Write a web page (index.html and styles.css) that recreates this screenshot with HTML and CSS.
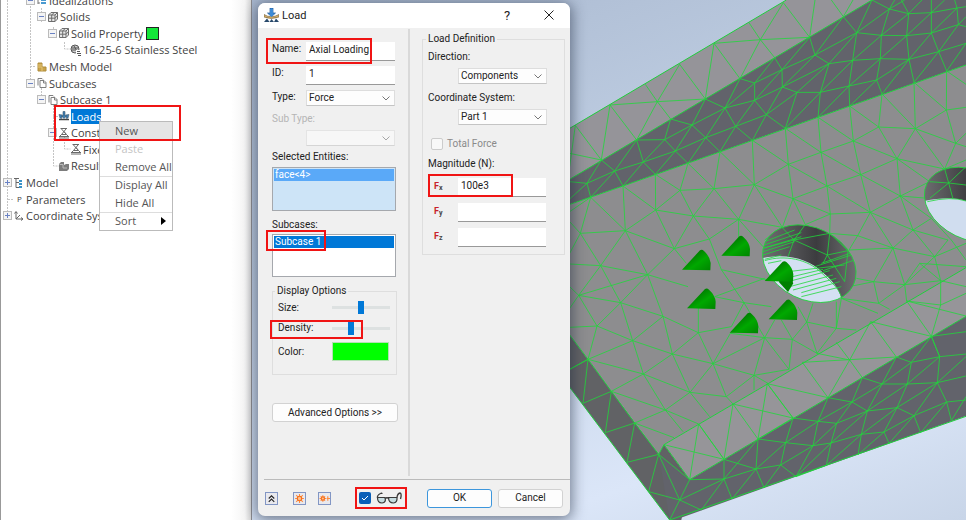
FILE: index.html
```html
<!DOCTYPE html>
<html lang="en">
<head>
<meta charset="utf-8">
<title>Load</title>
<link rel="stylesheet" href="styles.css">
</head>
<body>
<svg class="defs" aria-hidden="true">
  <defs>
    <symbol id="i-solid" viewBox="0 0 12 12"><path d="M1.500 4 4 1.500h6.500V8L8 10.500H1.500zM1.500 4H8v6.500M8 4l2.500-2.500M4.700 4v6.500M1.500 7.200H8M4.700 4l2.500-2.500M8 7.200l2.500-2.500" fill="#e8e8e8" stroke="#6e6e6e"/></symbol>
    <symbol id="i-ideal" viewBox="0 0 12 12"><path d="M2 1v9M2 3h2M2 9h2" stroke="#777" fill="none"/><path d="M5 2h5v2H5zM5 5h5v2H5zM5 8h5v2H5z" fill="#4a9ad0"/></symbol>
    <symbol id="i-steel" viewBox="0 0 12 12"><circle cx="5" cy="5" r="4" fill="#ccc" stroke="#555"/><path d="M2 4h6M2 6h4M4 2l3 5" stroke="#555"/><path d="M6 6h5v6H6z" fill="#fff"/><path d="M7 7.500h3M7 9.500h4M8 11.500h3" stroke="#555"/></symbol>
    <symbol id="i-mesh" viewBox="0 0 12 12"><path d="M2 2h4v4h4v4H2z" fill="#c9a34a" stroke="#b08d3c"/><path d="M2 6h4v4M2 4h4" stroke="#e5c677" fill="none"/></symbol>
    <symbol id="i-pages" viewBox="0 0 12 12"><path d="M2 8.500V1.500h4l1 1M4 3.500h4l2 2v5H4z" fill="#fff" stroke="#808080"/><path d="M7.500 3.500V6H10" fill="none" stroke="#808080"/></symbol>
    <symbol id="i-load" viewBox="0 0 12 12"><path d="M1 9.500h10" stroke="#444" stroke-width="1.500"/><path d="M6 8.500 3.500 6H5V1.500h2V6h1.500zM1 4.500 4.500 5 3.500 8.500 2 8zM11 4.500 7.500 5l1 3.500L10 8z" fill="#3b7fb5" stroke="#41596c" stroke-width=".6"/></symbol>
    <symbol id="i-cons" viewBox="0 0 12 12"><path d="M2.500 1.500H9M3.500 2l4.500 5M8 2 3.500 7.500h5L6 4.500M1 9.500h10M2 9l1.500-1.500M10 9 8.500 7.500M1 11h10" fill="none" stroke="#6a6a6a"/></symbol>
    <symbol id="i-result" viewBox="0 0 12 12"><path d="M1 4l2-2h3v3l2-1h3v5l-2 2H1z" fill="#7d7d7d"/><path d="M1.500 4.500H5V8h4" stroke="#bbb" fill="none"/></symbol>
    <symbol id="i-model" viewBox="0 0 12 12"><path d="M1 1.500h5M3 2v8.500h3M3 5.500h3" stroke="#666" fill="none"/><path d="M6 3h3v2H6zM6 6h3v2H6zM6 9h3v2H6z" fill="#3a92c8"/></symbol>
    <symbol id="i-axes" viewBox="0 0 12 12"><path d="M3 9V2M3 9h7M3 9l4-4M1.500 3.500 3 1.500l1.500 2M8 7.500 10 9 8 10.500" stroke="#666" fill="none"/></symbol>
  </defs>
</svg>

<main class="app">
  <section class="browser" aria-label="Model tree">
    <svg class="tree-lines" width="100" height="232" aria-hidden="true">
      <path d="M7.500 0v216M30.500 0v83M41.500 22v-14M53.500 38V26M64.500 42v7h6M30 66.500h6M41.500 88v12M53.500 105v61h6M64.500 136v13h6M8 199.500h6M53 116.500h6"/>
    </svg>
    <ul class="tree">
      <li class="l2"><button class="tg" aria-label="Collapse"></button><svg><use href="#i-ideal"/></svg><span>Idealizations</span></li>
      <li class="l3"><button class="tg" aria-label="Collapse"></button><svg><use href="#i-solid"/></svg><span>Solids</span></li>
      <li class="l4"><button class="tg" aria-label="Collapse"></button><svg><use href="#i-solid"/></svg><span>Solid Property</span><i class="swatch"></i></li>
      <li class="l5"><i class="leaf"></i><svg><use href="#i-steel"/></svg><span>16-25-6 Stainless Steel</span></li>
      <li class="l2"><i class="leaf"></i><svg><use href="#i-mesh"/></svg><span>Mesh Model</span></li>
      <li class="l2"><button class="tg" aria-label="Collapse"></button><svg><use href="#i-pages"/></svg><span>Subcases</span></li>
      <li class="l3"><button class="tg" aria-label="Collapse"></button><svg><use href="#i-pages"/></svg><span>Subcase 1</span></li>
      <li class="l4"><i class="leaf"></i><svg><use href="#i-load"/></svg><span class="sel">Loads</span></li>
      <li class="l4"><button class="tg" aria-label="Collapse"></button><svg><use href="#i-cons"/></svg><span>Const</span></li>
      <li class="l5"><i class="leaf"></i><svg><use href="#i-cons"/></svg><span>Fixe</span></li>
      <li class="l4"><i class="leaf"></i><svg><use href="#i-result"/></svg><span>Result</span></li>
      <li class="l0"><button class="tg plus" aria-label="Expand"></button><svg><use href="#i-model"/></svg><span>Model</span></li>
      <li class="l0"><i class="leaf"></i><b class="p">P</b><span>Parameters</span></li>
      <li class="l0"><button class="tg plus" aria-label="Expand"></button><svg><use href="#i-axes"/></svg><span>Coordinate Sys</span></li>
    </ul>
    <div class="menu" role="menu">
      <button role="menuitem" class="hot">New</button>
      <button role="menuitem" disabled>Paste</button>
      <button role="menuitem">Remove All</button>
      <hr>
      <button role="menuitem">Display All</button>
      <button role="menuitem">Hide All</button>
      <hr>
      <button role="menuitem">Sort<i class="sub"></i></button>
    </div>
    <i class="mark mark-tree"></i>
  </section>

  <section class="scene">
    <svg class="part" viewBox="-948 0 2142 1560" preserveAspectRatio="xMinYMin slice" aria-label="Meshed part">
      <defs>
        <linearGradient id="bore" x1="0" x2="1"><stop offset="0" stop-color="#707073"/><stop offset=".55" stop-color="#3c3c3f"/><stop offset="1" stop-color="#747477"/></linearGradient>
        <linearGradient id="cone" x1="0" y1="0" x2="1" y2="1"><stop offset=".2" stop-color="#006d00"/><stop offset=".6" stop-color="#00a800"/><stop offset="1" stop-color="#008400"/></linearGradient>
        <g id="load"><path d="M0 60 54 2Q60-2 66 4 84 20 86 40L85 62Z" fill="url(#cone)"/></g>
        <clipPath id="hole"><ellipse cx="724" cy="791" rx="147" ry="108" transform="rotate(26 724 791)"/></clipPath>
        <clipPath id="hole2"><ellipse cx="1207" cy="614" rx="145" ry="103" transform="rotate(26 1207 614)"/></clipPath>
      </defs>
      <path fill="#959499" d="M0 388 655 0H912L0 541Z"/>
      <path fill="#62636b" d="M0 541 912 0H1194V195L750 352 455 456 165 558 0 615Z"/>
      <path fill="#8d8d8f" d="M0 615 165 558 455 456 750 352 1194 195V805L288 1334 272 1363 0 998Z"/>
      <path fill="#616265" d="M0 998 272 1363 288 1334 365 1439 340 1560H305L0 1155Z"/>
      <path fill="#969599" d="M288 1334 1194 803V949L365 1439Z"/>
      <path fill="#62636b" d="M365 1439 1194 949V1248L320 1560H305L272 1363Z"/>
      <g class="mesh">
        <path class="edge" d="M0 388 655 0M0 541 912 0M0 615 165 558 455 456 750 352 1194 195M0 998 60 1078 130 1174 200 1269 272 1363 288 1334 365 1439 1194 949M288 1334 1194 803M0 1155 305 1560 1194 1249"/>
        <path d="M5 500 22 376 100 480 126 315 206 420M5 460 100 480M126 315 268 305 412 297M232 253 268 305 308 357M206 420 268 305 335 193 412 297 438 130 516 236 577 119 646 8 725 112 741 0M438 130 577 119 725 112M543 68 577 119 620 173M790 0 826 50 855 0"/>
        <path d="M5 545 57 550 100 480 140 513 206 420 226 486 290 419 206 420M57 550 5 597M57 550 68 592 140 513 57 550M140 513 165 558 226 486 140 513M226 486 262 523 322 453 226 486M290 419 308 357 372 375 290 419 322 453 372 375 412 297M322 453 360 490 413 413 322 453M372 375 413 413 471 324 372 375M413 413 456 455 503 379 413 413M412 297 471 324 560 249 516 236 471 324 503 379 560 301 471 324M503 379 553 421 595 344 503 379M560 249V301L642 209 560 249 620 173 642 209 725 112 741 165 642 209 643 261 560 301 595 344 643 261 687 277 595 344 652 385 687 277 757 277 652 385M643 261 741 165 783 191 643 261M757 277 783 191 687 277M757 277 750 352 843 258 757 277 854 181 783 191 866 98 741 165 826 50 866 98 854 181 843 258 845 318 926 240 843 258 937 176 854 181 940 106 866 98 912 0 964 27 866 98M926 240 942 282 1023 178 926 240 937 176 940 106 964 27 1022 41 940 106 1016 107 937 176 1023 178 1016 107 1022 41 1090 38 1016 107 1090 99 1023 178 1038 247 1112 155 1023 178M1090 99 1090 38 1167 24 1090 99 1112 155 1136 213 1194 130 1112 155 1171 74 1090 99M1022 41 1062 0M1022 41 1000 0M964 27 980 0M964 27 1010 0M1090 38V0M1090 38 1130 0M1171 74 1167 24 1160 0M1171 74 1194 80M1167 24 1194 20M1171 74 1194 50"/>
        <path d="M5 665 37 700 68 592 172 692 37 700 5 760M37 700 98 797 172 692 165 558 263 630 172 692 239 824 319 746 172 692M5 635 68 592M263 630 262 523 336 571 263 630 376 648 336 571 360 490 438 566 336 571M263 630 319 746 376 648 438 566 456 455 559 554 438 566 512 658 376 648 424 717 319 746M512 658 559 554 553 421 661 493 559 554 675 596 661 493 652 385 759 457 661 493 777 558 759 457 750 352 856 423 759 457 878 524 856 423 845 318 932 381 856 423 987 476 932 381 942 282 1042 386 932 381M1042 386 1038 247 1135 330 1042 386 987 476 1130 507 1042 386 1163 430 1135 330 1136 213 1194 253M1135 330 1194 322M1163 430 1194 400M1163 430 1194 440M1163 430 1130 507 1194 480M987 476 878 524 997 588 987 476 1085 545 997 588 907 637 878 524 777 558 907 637 787 642 777 558 675 596 787 642 712 674 675 596 643 682 559 554M512 658 643 682 590 720M512 658V720M424 717 512 658 585 740M424 717 460 809M787 642 785 700 869 707 907 637 975 744 869 707 843 750M907 637 1035 690 997 588 1090 655 1035 690 975 744 1100 770 1035 690 1140 720 1100 770 1194 730M1090 655 1150 720 1194 780M975 744 917 845 865 835M975 744 1010 854 1100 770 1118 842M843 750 975 744M1010 854 1055 790 1194 800M997 588 1080 595"/>
        <path d="M5 792 98 797 239 824 32 886 98 797 158 908 239 824 285 949 158 908 87 978 32 886 5 860M32 886 158 908M32 886 5 925M87 978 5 982M87 978 60 1078 194 1022 87 978M158 908 194 1022 285 949 391 998V900M239 824 360 860M319 746 355 790M460 809 528 908 440 890M460 809 600 840M528 908 490 980 391 998 313 1062 285 949M528 908 590 1013 487 1000 435 1091 391 998M440 890 590 835M528 908 610 920M194 1022 313 1062 226 1122 194 1022M60 1078 226 1122 130 1174M60 1078 5 1108M313 1062 366 1177 226 1122 292 1230 366 1177 435 1091 313 1062M435 1091 558 1126 475 1190 435 1091 590 1013 558 1126 663 1108 590 1013 673 1018 663 1108M558 1126V1170M558 1126 600 1150M673 1018 716 966 690 920M716 966 747 1060 805 985 716 966 735 910M673 1018 747 1060M673 1018 640 960M590 1013 620 960M805 985V905M805 985 865 990M805 985 820 895 932 910 917 845 843 860 820 895 930 940M917 845 1010 854 932 910 965 928M1010 854 1016 903M1010 854 1118 842 1055 790M130 1174 292 1230 200 1269 318 1313M292 1230 392 1272M292 1230 345 1295M366 1177 475 1190 495 1212M366 1177 425 1250"/>
        <path d="M288 1334 468 1378 392 1272 365 1439M392 1272 468 1378 495 1212 585 1233 675 1254 598 1151 570 1317 495 1212M598 1151 780 1193 703 1087 985 1071 908 965 845 1080 780 1193M675 1254 598 1151M747 1060 845 1080M805 1027 845 1080 883 1133M908 965 1090 1009 1016 903 1194 948M1118 842V915L1016 903M1118 915 1090 1009M1118 915 1194 880M1118 842 1194 860"/>
        <path d="M5 1108 60 1078 45 1210 130 1174 112 1298 200 1269 177 1387 272 1363 242 1475 335 1500 272 1363 365 1439 335 1500 305 1560M365 1439 468 1437 335 1500 400 1530 468 1437 492 1497 564 1407 468 1437V1378L564 1407 570 1317 468 1437M564 1407 588 1463 638 1395 564 1407 653 1328 570 1317 675 1254 653 1328 638 1395 684 1430 735 1337 638 1395M653 1328 750 1264 675 1254M653 1328 735 1337 750 1264 806 1270 735 1337 789 1329 806 1270 898 1233 789 1329 775 1396 684 1430 789 1329 880 1303 775 1396M750 1264 852 1206 780 1193 750 1264M852 1206 806 1270M852 1206 883 1133 942 1152 852 1206 898 1233 942 1152 1018 1152 898 1233 987 1223 1018 1152 1030 1087 942 1152 985 1071 1030 1087 1115 1070 1018 1152 1108 1148 987 1223 880 1303 898 1233M987 1223 1038 1247 948 1296 987 1223M880 1303 870 1364 948 1296 880 1303M948 1296 963 1330 1038 1247 1108 1148 1115 1070 1090 1009 1030 1087M1038 1247 1058 1298 1136 1206 1038 1247M1136 1206 1108 1148 1194 1128M1136 1206 1150 1262 1194 1190M1136 1206 1194 1200M1115 1070 1194 1062M1108 1148 1194 1070M1115 1070 1090 1009 1194 995"/>
      </g>
      <g clip-path="url(#hole)">
        <path fill="url(#bore)" d="M580 660H880V920H580Z"/>
        <path fill="#d4e0f3" d="M560 780C650 755 720 775 765 818 805 850 820 880 826 920H560Z"/>
        <path class="mesh" d="M590 725 680 690M588 735 700 698M585 745 700 710M585 755 680 725M585 765 665 740M590 778 640 765M640 680 678 720 710 676M585 745 678 720 785 700M678 720 660 770M678 720 778 765 840 752M765 790 778 765 785 700 840 752 830 845 778 765M760 790 860 755M740 800 850 765M765 812 860 780M660 815 830 795M665 832 765 808M660 845 785 812M665 860 795 825M675 870 805 835M700 878 815 845M700 890 820 860M600 790 640 782"/>
      </g>
      <g clip-path="url(#hole2)">
        <path fill="url(#bore)" d="M1060 490H1320V740H1060Z"/>
        <path fill="#d0ddef" d="M1060 605Q1150 585 1200 605V740H1060Z"/>
        <path class="mesh" d="M1085 545 1142 549 1130 507M1194 500 1142 549 1155 597M1085 595 1142 549 1194 555M1078 605Q1150 588 1194 603"/>
      </g>
      <g class="mesh"><ellipse cx="724" cy="791" rx="147" ry="108" transform="rotate(26 724 791)"/><ellipse cx="1207" cy="614" rx="145" ry="103" transform="rotate(26 1207 614)"/><path d="M590 782C650 763 720 778 760 818 800 855 815 870 820 892"/></g>
      <path d="M632 845 660 820 676 850 660 876Z" fill="#008000"/>
      <use href="#load" x="342" y="749"/><use href="#load" x="460" y="707"/><use href="#load" x="590" y="783"/>
      <use href="#load" x="357" y="865"/><use href="#load" x="485" y="938"/><use href="#load" x="602" y="898"/>
    </svg>

    <form class="dialog" onsubmit="return false">
      <header class="title">
        <svg class="logo" viewBox="0 0 15 15"><path d="M7.500 8.500 3.500 5H6V0h3v5h2.500z" fill="#3d8bd6" stroke="#205a9a" stroke-width=".7"/><path d="M0 6.500Q7 11 15 6.500V9Q7 12 0 9z" fill="#d8b36a" stroke="#6b5835" stroke-width=".6"/><path d="M7.500 9 4.500 6H6V1h3v5h1.500z" fill="#3d8bd6"/><path d="M0 14 3 10.500 5.500 14 7.500 11 10 14 12 10.500 15 14z" fill="#28496b"/></svg>
        <h1>Load</h1>
        <button type="button" class="tb" aria-label="Help">?</button>
        <button type="button" class="tb" aria-label="Close"><svg viewBox="0 0 10 10"><path d="M.5.5l9 9M9.500.5l-9 9"/></svg></button>
      </header>
      <div class="cols">
        <div class="left">
          <div class="grid">
            <label for="nm">Name:</label><input id="nm" type="text" value="Axial Loading">
            <label for="id">ID:</label><input id="id" type="text" value="1">
            <label for="ty">Type:</label><select id="ty"><option>Force</option></select>
          </div>
          <label class="off" for="st">Sub Type:</label>
          <select id="st" class="indent" disabled><option></option></select>
          <label class="cap" for="se">Selected Entities:</label>
          <div id="se" class="list blue" role="listbox" tabindex="0"><div role="option">face&lt;4&gt;</div></div>
          <label class="cap two" for="sc">Subcases:</label>
          <div id="sc" class="list cases" role="listbox" tabindex="0"><div role="option">Subcase 1</div></div>
          <fieldset class="disp">
            <legend>Display Options</legend>
            <label for="sz">Size:</label><input id="sz" type="range" min="0" max="100" value="50">
            <label for="dn">Density:</label><input id="dn" type="range" min="0" max="100" value="31">
            <label for="cl">Color:</label><button type="button" id="cl" class="color" aria-label="Color"></button>
          </fieldset>
          <button type="button" class="btn adv">Advanced Options &gt;&gt;</button>
        </div>
        <div class="right">
          <fieldset class="def">
            <legend>Load Definition</legend>
            <label for="dr">Direction:</label>
            <select id="dr"><option>Components</option></select>
            <label for="cs">Coordinate System:</label>
            <select id="cs"><option>Part 1</option></select>
            <label class="check"><input type="checkbox" disabled>Total Force</label>
            <div class="mag">Magnitude (N):</div>
            <div class="force"><label for="fx">F<sub>x</sub></label><input id="fx" type="text" value="100e3"></div>
            <div class="force"><label for="fy">F<sub>y</sub></label><input id="fy" type="text"></div>
            <div class="force"><label for="fz">F<sub>z</sub></label><input id="fz" type="text"></div>
          </fieldset>
        </div>
      </div>
      <footer class="foot">
        <button type="button" class="mini" aria-label="Collapse"><svg viewBox="0 0 10 10"><path d="M2.500 5 5 2.500 7.500 5M2.500 8 5 5.500 7.500 8" fill="none" stroke="#222"/></svg></button>
        <button type="button" class="mini m2" aria-label="Preview"><svg viewBox="0 0 10 10"><path d="M5 1v8M1 5h8M2 2l6 6M8 2 2 8" stroke="#ff8b3d"/><circle cx="5" cy="5" r="2" fill="#ffc08d" stroke="#f36f1d"/></svg></button>
        <button type="button" class="mini m3" aria-label="Preview all"><svg viewBox="0 0 10 10"><path d="M3.500 2v6M.5 5h6M1.500 3l4 4M5.500 3l-4 4M8 3v4M7 5h3" stroke="#ff8b3d"/><circle cx="3.500" cy="5" r="1.500" fill="#ffc08d" stroke="#f36f1d"/></svg></button>
        <label class="view"><input type="checkbox" checked aria-label="Show preview"><svg viewBox="0 0 26 12"><path d="M1.500 6Q1 3 4.500 1.500 6 .5 6 2M21 5.500Q21.500 1.500 24 1 26 1.500 24.500 7" fill="none" stroke="#3a3a3a" stroke-width="1.300"/><path d="M1.500 5.500h7.500q1.500 5-3 5.500-4.500 0-4.500-5.500zM12.500 5.500h8.500q.5 5-3.500 5.500-5 0-5-5.500z" fill="#c5dce0" stroke="#3a3a3a" stroke-width="1.200"/><path d="M9 6.500q2-1.500 4 0" fill="none" stroke="#3a3a3a" stroke-width="1.300"/></svg></label>
        <button class="btn ok">OK</button>
        <button type="button" class="btn">Cancel</button>
      </footer>
      <i class="mark mark-name"></i><i class="mark mark-sub"></i><i class="mark mark-den"></i><i class="mark mark-fx"></i><i class="mark mark-view"></i>
    </form>
  </section>
</main>
</body>
</html>
```

FILE: styles.css
```css
* { box-sizing: border-box; }
body {
  margin: 0;
  font: 11px/14px "Open Sans", "Noto Sans", sans-serif;
  color: #222;
  overflow: hidden;
}
button, input, select { font: inherit; color: inherit; margin: 0; }
.defs { position: absolute; width: 0; height: 0; }
.app { display: grid; grid-template-columns: 252px 1fr; min-height: 100vh; }

/* Model tree */
.browser {
  position: relative;
  border-left: 1px solid #999;
  border-right: 1px solid #8b8b8f;
  background: linear-gradient(to left, #d8d8d8, #f5f5f5 6px, #fff 20px);
}
.tree-lines { position: absolute; left: -1px; top: 0; fill: none; stroke: #c4c4c4; stroke-dasharray: 2 1; }
.tree {
  position: relative;
  display: grid;
  grid-auto-rows: 1fr;
  height: 232px;
  margin: -8px 0 0;
  padding: 0;
  list-style: none;
  color: #3f3f3f;
}
.tree li { display: flex; align-items: center; white-space: nowrap; }
.tree svg { width: 12px; height: 12px; margin-right: 1px; }
.tree span { line-height: 15px; }
.l0 { padding-left: 2px; }
.l2 { padding-left: 25px; }
.l3 { padding-left: 36px; }
.l4 { padding-left: 47px; }
.l5 { padding-left: 59px; }
.leaf { width: 10px; }
.tg {
  width: 9px;
  height: 9px;
  margin-right: 1px;
  padding: 0;
  border: 1px solid #bbb;
  background: linear-gradient(#6a82c4, #6a82c4) center / 5px 1px no-repeat, #f4f4f4;
}
.plus { background: linear-gradient(#6a82c4, #6a82c4) center / 5px 1px no-repeat, linear-gradient(#6a82c4, #6a82c4) center / 1px 5px no-repeat, #f4f4f4; }
.p { width: 13px; padding-left: 4px; font-size: 8px; font-weight: 400; }
.swatch { width: 13px; height: 13px; margin-left: 3px; border: 1px solid #222; background: #14e63a; }
.sel { background: #0078d7; color: #fff; }
.menu {
  position: absolute;
  left: 98px;
  top: 121px;
  width: 74px;
  border: 1px solid #bbb;
  background: #fff;
  display: flex;
  flex-direction: column;
}
.menu button {
  position: relative;
  height: 18px;
  padding: 0 0 0 15px;
  border: 0;
  background: none;
  text-align: left;
  white-space: nowrap;
  color: #555;
}
.menu .hot { background: #e5e5e5; }
.menu button:disabled { color: #c4c4c4; }
.menu hr { width: 100%; height: 0; margin: 0 0 -1px; border: 0; border-top: 1px solid #ddd; }
.sub { position: absolute; right: 6px; top: 5px; border: 4px solid transparent; border-left: 5px solid #000; border-right: 0; }

.mark { position: absolute; border: 2px solid #f01414; pointer-events: none; }
.mark-tree { left: 53px; top: 105px; width: 127px; height: 36px; }
.mark-name { left: 8px; top: 35px; width: 106px; height: 26px; }
.mark-sub { left: 8px; top: 227px; width: 60px; height: 21px; }
.mark-den { left: 12px; top: 317px; width: 93px; height: 19px; }
.mark-fx { left: 170px; top: 171px; width: 85px; height: 23px; }
.mark-view { left: 97px; top: 484px; width: 52px; height: 22px; }

/* Graphics window */
.scene { position: relative; background: linear-gradient(160deg, #a9b8cf, #bccbe0 35%, #dbe6f8 80%, #c8d5e8); }
.part { position: absolute; inset: 0; width: 100%; height: 100%; }
.mesh { fill: none; stroke: #1fd83a; stroke-width: 2.4; }
.edge { stroke: #20cf3c; stroke-width: 3; }

/* Load dialog */
.dialog {
  position: relative;
  width: 312px;
  margin: 3px 0 0 6px;
  border-radius: 7px;
  background: #f0f0f0;
  box-shadow: 0 2px 14px 2px rgba(30, 40, 60, .55);
  font-family: Roboto, "Liberation Sans", sans-serif;
  font-size: 10px;
}
.title { display: flex; align-items: center; height: 25px; padding: 0 8px 0 6px; border-radius: 7px 7px 0 0; background: #fff; }
.title h1 { flex: 1; margin: 0 0 0 3px; font-size: 11px; font-weight: 400; }
.logo { width: 15px; height: 15px; }
.tb { width: 26px; height: 22px; margin-left: 16px; padding: 0; border: 0; background: none; font-size: 13px; }
.tb svg { width: 10px; height: 10px; stroke: #222; }
.cols { display: flex; height: 451px; }
.left { width: 152px; margin: 1px 0 3px; padding: 13px 13px 0 14px; border-right: 2px solid #d9d9d9; }
.grid { display: grid; grid-template-columns: 34px 1fr; row-gap: 5px; }
input[type="text"] {
  width: 100%;
  min-width: 0;
  height: 19px;
  padding: 0 3px 3px;
  border: 0;
  border-bottom: 1px solid #999;
  background: #fff;
}
select {
  appearance: none;
  width: 100%;
  height: 16px;
  padding: 0 2px;
  border: 1px solid #ddd;
  border-bottom-color: #c4c4c4;
  background: #fdfdfd url("data:image/svg+xml,%3Csvg xmlns='http://www.w3.org/2000/svg' width='8' height='5'%3E%3Cpath d='M.5.5 4 4 7.500.5' fill='none' stroke='%23777'/%3E%3C/svg%3E") right 4px center no-repeat;
  line-height: 14px;
}
select:disabled { opacity: .6; }
.left > label { display: block; }
.off { margin-top: 6px; color: #b5b5b5; }
.left .indent { width: 89px; margin: 4px 0 0 34px; display: block; }
.cap { margin-top: 4px; }
.two { margin-top: 7px; }
.list { height: 44px; margin: 3px -1px 0 0; padding: 1px; border: 1px solid #a5a8ad; background: #fff; color: #fff; }
.list div { height: 12px; padding-left: 1px; line-height: 12px; background: #0078d7; }
.blue { background: #cde4f7; }
.blue div { background: #5aa9f8; }
.cases { height: 43px; margin-top: 2px; }
fieldset { min-width: 0; margin: 0; border: 1px solid #dedede; }
legend { padding: 0 2px; }
.disp { display: grid; grid-template-columns: 54px 58px; row-gap: 5px; align-items: center; margin: 7px -2px 0 0; padding: 2px 5px 12px; height: 91px; }
.disp legend { margin-left: -3px; }
input[type="range"] { appearance: none; width: 58px; height: 14px; background: linear-gradient(#dde1e1, #dde1e1) center / 100% 3px no-repeat; }
input[type="range"]::-webkit-slider-thumb { appearance: none; width: 6px; height: 13px; background: #0078d7; }
.color { width: 57px; height: 19px; padding: 0; border: 1px solid #b5e0b5; background: #0f0; }
.btn { height: 19px; padding: 0; border: 1px solid #d2d2d2; border-radius: 3px; background: #fdfdfd; }
.adv { width: 126px; margin-top: 28px; }
.right { flex: 1; padding: 4px 6px 0 12px; }
.def { display: flex; flex-direction: column; height: 223px; padding: 4px 17px 0 5px; }
.def legend { margin-left: -2px; }
.def select { width: 89px; margin: 4px 0 0 30px; flex: none; }
.def select + label { margin-top: 7px; }
.def .check { display: flex; align-items: center; gap: 4px; margin: 12px 0 0 3px; color: #8a8a8a; }
.check input { appearance: none; width: 12px; height: 12px; border: 1px solid #ccc; border-radius: 2px; background: #f8f8f8; }
.mag { margin-top: 6px; }
.force { display: grid; grid-template-columns: 30px 88px; align-items: center; margin: 7px 0 -1px; }
.force label { padding: 0 0 3px 6px; font-size: 9px; line-height: 13px; font-weight: 700; color: #c8202c; }
.force sub { font-size: 7px; line-height: 7px; vertical-align: -1px; color: #444; }
.foot { display: flex; align-items: center; height: 37px; margin-left: 6px; padding: 0 7px 0 1px; border-top: 1px solid #bbb; }
.mini { width: 13px; height: 13px; padding: 0; border: 1px solid #8296c4; background: #e9e9ee; display: flex; }
.mini svg { width: 11px; height: 11px; }
.m2 { margin-left: 15px; }
.m3 { margin-left: 12px; }
.view { display: flex; align-items: center; gap: 5px; margin: 0 25px 0 28px; }
.view input {
  appearance: none;
  width: 12px;
  height: 12px;
  border-radius: 2px;
  background: #0a5fb8 url("data:image/svg+xml,%3Csvg xmlns='http://www.w3.org/2000/svg' width='8' height='6'%3E%3Cpath d='M1 3l2 2 4-4' fill='none' stroke='white'/%3E%3C/svg%3E") center no-repeat;
}
.view svg { width: 26px; height: 12px; }
.foot .btn { flex: 1; margin-left: 6px; }
.foot .ok { margin-left: 0; border-color: #3c96dc; }
```
